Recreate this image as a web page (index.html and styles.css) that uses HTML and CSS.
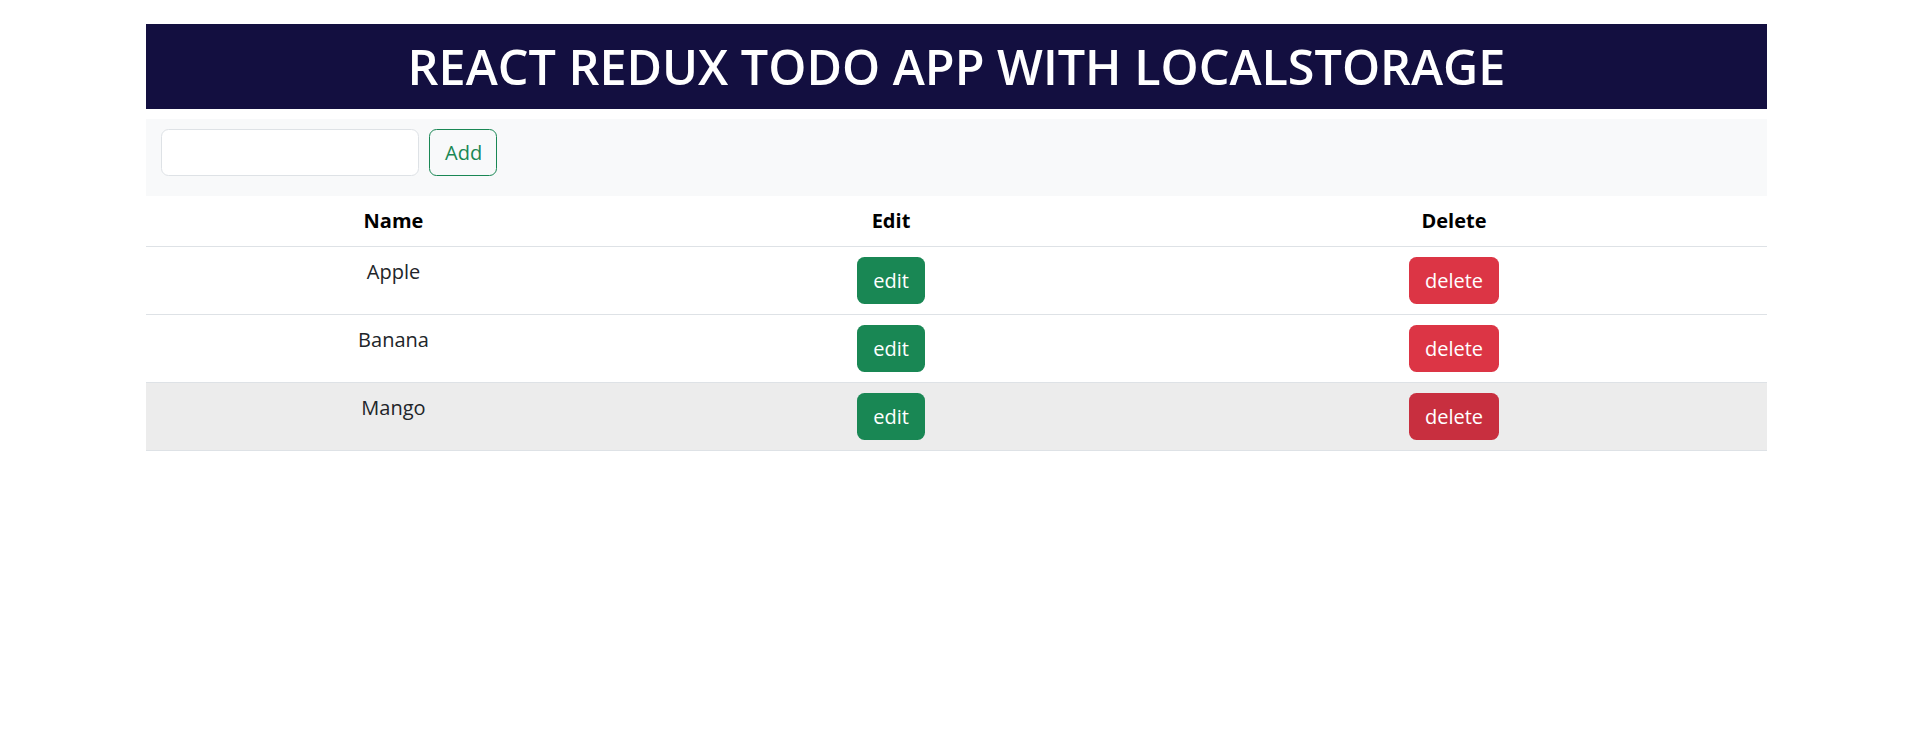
FILE: index.html
```html
<!DOCTYPE html>
<html lang="en">
<head>
    <meta charset="UTF-8">
    <meta name="viewport" content="width=device-width, initial-scale=1.0">
    <title>React Redux Todo App</title>
    <link rel="stylesheet" href="styles.css">
</head>
<body>
    <div class="container">
        <h1 class="title">REACT REDUX TODO APP WITH LOCALSTORAGE</h1>

        <div class="add-bar">
            <form class="add-form">
                <input type="text" class="todo-input">
                <button type="button" class="btn btn-outline">Add</button>
            </form>
        </div>

        <table class="todo-table">
            <thead>
                <tr>
                    <th class="col-name">Name</th>
                    <th class="col-edit">Edit</th>
                    <th class="col-delete">Delete</th>
                </tr>
            </thead>
            <tbody>
                <tr>
                    <td>Apple</td>
                    <td><button class="btn btn-edit">edit</button></td>
                    <td><button class="btn btn-delete">delete</button></td>
                </tr>
                <tr>
                    <td>Banana</td>
                    <td><button class="btn btn-edit">edit</button></td>
                    <td><button class="btn btn-delete">delete</button></td>
                </tr>
                <tr class="hovered">
                    <td>Mango</td>
                    <td><button class="btn btn-edit">edit</button></td>
                    <td><button class="btn btn-delete active">delete</button></td>
                </tr>
            </tbody>
        </table>
    </div>
</body>
</html>
```

FILE: styles.css
```css
body {
    margin: 0;
    font-family: "Open Sans", "Noto Sans", sans-serif;
    font-size: 20px;
    line-height: 1.5;
    color: #212529;
    background-color: #fff;
}

.container {
    width: 1621px;
    margin: 0 auto;
    padding-right: 2px;
}

.title {
    margin: 24px 0 0;
    padding: 12px 0 13px;
    background-color: #130f40;
    color: #fff;
    text-align: center;
    font-size: 48.5px;
    font-weight: 600;
    line-height: 60px;
}

.add-bar {
    margin-top: 10px;
    padding: 10px 15px 20px;
    background-color: #f8f9fa;
}

.add-form {
    display: flex;
    gap: 10px;
}

.todo-input {
    box-sizing: border-box;
    width: 258px;
    height: 47px;
    border: 1px solid #dee2e6;
    border-radius: 7.5px;
    background: #fff;
    font: inherit;
    padding: 7.5px 15px;
}

.btn {
    box-sizing: border-box;
    height: 47px;
    padding: 7.5px 15px;
    border: 1px solid transparent;
    border-radius: 7.5px;
    font-family: inherit;
    font-size: 20px;
    line-height: 30px;
    cursor: pointer;
}

.btn-outline {
    width: 68px;
    color: #198754;
    border-color: #198754;
    background: transparent;
}

.btn-edit {
    color: #fff;
    background-color: #198754;
}

.btn-delete {
    color: #fff;
    background-color: #dc3545;
}

.btn-delete.active {
    background-color: #c82f3f;
}

.todo-table {
    width: 100%;
    border-collapse: collapse;
}

.todo-table th,
.todo-table td {
    padding: 10px;
    text-align: center;
    vertical-align: top;
    border-bottom: 1px solid #dee2e6;
}

.todo-table th {
    font-weight: 700;
    color: #000;
}

.col-name {
    width: 475px;
}

.col-edit {
    width: 480px;
}

.todo-table tr.hovered td {
    background-color: #ececec;
}
```
